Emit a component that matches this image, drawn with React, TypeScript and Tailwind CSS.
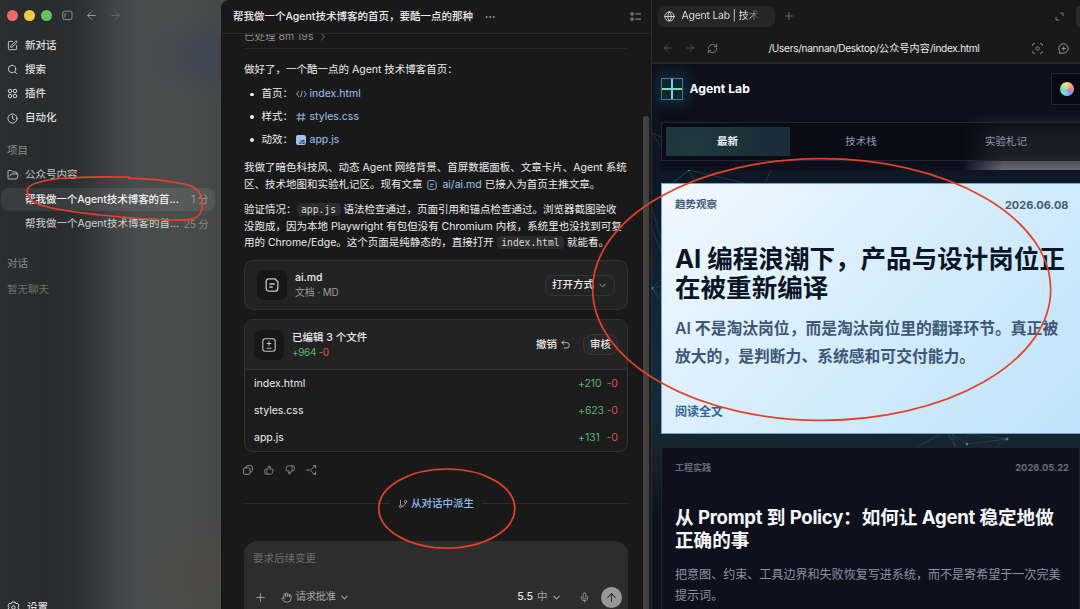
import type { ReactNode } from 'react';
import {
  ArrowLeft,
  ArrowRight,
  ArrowUp,
  ChevronDown,
  ChevronRight,
  Clock,
  Ellipsis,
  FolderOpen,
  GitBranch,
  Globe,
  Hand,
  Mic,
  Plus,
  RefreshCw,
  Search,
  SquarePen,
  ThumbsDown,
  ThumbsUp,
} from 'lucide-react';

const files = [
  { name: 'index.html', added: '+210', removed: '-0' },
  { name: 'styles.css', added: '+623', removed: '-0' },
  { name: 'app.js', added: '+131', removed: '-0' },
];

export default function App() {
  return (
    <div className="relative flex h-[609px] w-[1080px] overflow-hidden whitespace-nowrap bg-[#4a4b4c] font-['Inter','Noto_Sans_CJK_SC',sans-serif] text-[10.5px] leading-4 text-[#ececec]">
      <Sidebar />
      <Chat />
      <Preview />
      <Annotations />
    </div>
  );
}

function Sidebar() {
  return (
    <aside className="h-full w-[221px] shrink-0 overflow-hidden bg-[radial-gradient(ellipse_66px_46px_at_208px_56px,#3f4754_0%,#3f475400_100%),radial-gradient(ellipse_80px_55px_at_225px_575px,#4d4a42_0%,#4d4a4200_100%),linear-gradient(to_right,#2b2d2e_0px,#292c2d_45px,#2c2d2f_72px,#353638_92px,#434446_115px,#4a4b4c_140px,#4b4d4d_175px,#474848_221px)]">
      <div className="flex h-[31px] items-center pl-[6.5px]">
        <span className="size-[11px] rounded-full bg-[#ee6a65]" />
        <span className="ml-[6.3px] size-[11px] rounded-full bg-[#f4c945]" />
        <span className="ml-[6.3px] size-[11px] rounded-full bg-[#61c566]" />
        <svg className="ml-[9.5px] text-[#9a9c9c]" width="11" height="11" viewBox="0 0 11 11" fill="none" stroke="currentColor" strokeWidth="0.9">
          <rect x="0.8" y="1.2" width="9.2" height="8.4" rx="1.8" />
          <path d="M3 3.2v4.4" />
        </svg>
        <ArrowLeft className="ml-3 text-[#a4a6a6]" size={13} strokeWidth={1.6} />
        <ArrowRight className="ml-[11px] text-[#6a6c6c]" size={13} strokeWidth={1.6} />
      </div>

      <nav className="mt-[2.5px] font-medium text-[#dedfdf]">
        <NavItem icon={<SquarePen size={11} strokeWidth={1.9} />} label="新对话" />
        <NavItem icon={<Search size={11} strokeWidth={1.9} />} label="搜索" />
        <NavItem icon={<PluginIcon />} label="插件" />
        <NavItem icon={<Clock size={11} strokeWidth={1.9} />} label="自动化" />
      </nav>

      <div className="mt-[12.5px] pl-[7px] text-[#8b8d8d]">项目</div>
      <div className="mt-1 text-[#c3c4c4]">
        <NavItem icon={<FolderOpen size={12} strokeWidth={1.8} />} label="公众号内容" />
      </div>
      <div className="ml-px mt-px flex h-[23.5px] w-[214px] items-center rounded-lg bg-white/8 pl-6 pr-[6.5px] font-medium tracking-[-0.06px] text-[#f2f2f2]">
        帮我做一个Agent技术博客的首...
        <span className="ml-auto font-normal text-[#999b9b]">1 分</span>
      </div>
      <div className="ml-px mt-px flex h-[23.5px] w-[214px] items-center pl-6 pr-[6.5px] text-[#d2d3d3]">
        帮我做一个Agent技术博客的首...
        <span className="ml-auto text-[10.2px] tracking-[-0.2px] text-[#8b8d8d]">25 分</span>
      </div>

      <div className="mt-5 pl-[7px] text-[#8b8d8d]">对话</div>
      <div className="mt-[10px] pl-[7px] text-[#6c6e6e]">暂无聊天</div>
      <div className="mt-[302px] flex items-center gap-[7px] pl-[7px] font-medium text-[#dedfdf]">
        <svg width="13" height="13" viewBox="0 0 13 13" fill="none" stroke="currentColor" strokeWidth="1" strokeLinejoin="round">
          <path d="M5 1h3l.8 1.6 2-.1 1.2 2.4-1 1.6 1 1.6-1.2 2.4-2-.1L8 12H5l-.8-1.6-2 .1L1 8.1l1-1.6-1-1.6 1.2-2.4 2 .1z" />
          <circle cx="6.5" cy="6.5" r="1.7" />
        </svg>
        设置
      </div>
    </aside>
  );
}

function NavItem({ icon, label }: { icon: ReactNode; label: string }) {
  return (
    <div className="flex h-[24.2px] items-center">
      <span className="flex w-[25px] shrink-0 justify-center">{icon}</span>
      {label}
    </div>
  );
}

function PluginIcon() {
  return (
    <svg width="11" height="11" viewBox="0 0 11 11" fill="none" stroke="currentColor" strokeWidth="0.95">
      <circle cx="3" cy="3" r="1.75" />
      <circle cx="8" cy="3" r="1.75" />
      <circle cx="3" cy="8" r="1.75" />
      <circle cx="8" cy="8" r="1.75" />
    </svg>
  );
}

function Chat() {
  return (
    <main className="relative flex h-full w-[431px] shrink-0 flex-col overflow-hidden rounded-tl-lg border-r border-[#2c2c2c] bg-[#191919]">
      <header className="flex h-[34px] shrink-0 items-center border-b border-[#292929] pl-3 pr-2.5 font-medium">
        帮我做一个Agent技术博客的首页，要酷一点的那种
        <Ellipsis className="ml-[11px] text-[#9a9a9a]" size={12} />
        <svg className="ml-auto text-[#9a9a9a]" width="11" height="11" viewBox="0 0 11 11" fill="none" stroke="currentColor">
          <circle cx="2" cy="2.9" r="1.3" />
          <circle cx="2" cy="8.1" r="1.3" />
          <path d="M5.5 2.9H11M5.5 8.1H11" />
        </svg>
      </header>

      <div className="min-h-0 flex-1 overflow-hidden px-[23px]">
        <div className="-mt-[5px] flex h-5 items-start border-b border-[#262626] text-[#8f8f8f]">
          已处理 8m 19s
          <ChevronRight className="ml-1 mt-0.5" size={12} strokeWidth={1.5} />
        </div>
        <p className="mt-[13px]">做好了，一个酷一点的 Agent 技术博客首页：</p>
        <ul className="mt-[5px]">
          <FileLink label="首页：" name="index.html" icon={<CodeIcon />} />
          <FileLink label="样式：" name="styles.css" icon={<HashIcon />} />
          <FileLink
            label="动效："
            name="app.js"
            icon={<span className="flex size-[10px] items-end justify-end rounded-[2px] bg-[#99c4f2] pr-px text-[5px] font-bold leading-[6px] text-[#191919]">JS</span>}
          />
        </ul>
        <p className="mt-[8.5px] leading-[16.7px]">
          我做了暗色科技风、动态 Agent 网络背景、首屏数据面板、文章卡片、Agent 系统
          <br />
          区、技术地图和实验札记区。现有文章{' '}
          <DocIcon className="mx-0.5 inline size-[10px] text-[#8ab8ec]" />{' '}
          <span className="text-[#99c4f2]">ai/ai.md</span> 已接入为首页主推文章。
        </p>
        <p className="mt-[8.5px] leading-[16.7px]">
          验证情况：<Code>app.js</Code> 语法检查通过，页面引用和锚点检查通过。浏览器截图验收
          <br />
          没跑成，因为本地 Playwright 有包但没有 Chromium 内核，系统里也没找到可复
          <br />
          用的 Chrome/Edge。这个页面是纯静态的，直接打开 <Code>index.html</Code> 就能看。
        </p>

        <div className="mt-[8.5px] flex h-[50px] items-center rounded-[9px] border border-[#303030] bg-[#232323] px-3">
          <span className="flex size-[30px] items-center justify-center rounded-[7px] bg-[#171717]">
            <DocIcon className="size-[14px] text-[#c4c4c4]" />
          </span>
          <div className="ml-2 leading-[15px]">
            <div className="font-medium">ai.md</div>
            <div className="text-[9.9px] tracking-[-0.1px] text-[#9b9b9b]">文档 · MD</div>
          </div>
          <button className="ml-auto flex h-[21px] items-center rounded-[8px] border border-[#353535] px-1.5 font-medium">
            打开方式
            <ChevronDown className="ml-[3px] text-[#a5a5a5]" size={11} strokeWidth={2} />
          </button>
        </div>

        <div className="mt-[9px] overflow-hidden rounded-[9px] border border-[#303030] bg-[#1c1c1c]">
          <div className="flex h-[49.5px] items-center border-b border-[#303030] bg-[#232323] px-[9px]">
            <span className="flex size-[30px] items-center justify-center rounded-[7px] bg-[#171717]">
              <svg className="text-[#c4c4c4]" width="14" height="14" viewBox="0 0 14 14" fill="none" stroke="currentColor" strokeWidth="1.1">
                <rect x="0.8" y="0.8" width="12.4" height="12.4" rx="2.5" />
                <path d="M7 3.2v4.6M4.7 5.5h4.6M4.7 10.3h4.6" />
              </svg>
            </span>
            <div className="ml-2 leading-[15px]">
              <div className="font-medium">已编辑 3 个文件</div>
              <div className="text-[10px] tracking-[-0.35px]">
                <span className="text-[#58b470]">+964</span> <span className="text-[#d9524a]">-0</span>
              </div>
            </div>
            <span className="ml-auto font-medium">撤销</span>
            <svg className="ml-1 text-[#c4c4c4]" width="9" height="9" viewBox="0 0 9 9" fill="none" stroke="currentColor" strokeWidth="0.9" strokeLinecap="round" strokeLinejoin="round">
              <path d="M3 .6.8 2.6 3 4.6M.8 2.6h4.8a2.7 2.7 0 0 1 0 5.4H3.4" />
            </svg>
            <button className="ml-[13px] h-[21px] rounded-[8px] border border-[#363636] bg-[#282828] px-1.5 font-medium">审核</button>
          </div>
          {files.map((f) => (
            <div key={f.name} className="flex h-[27.2px] items-center px-[9px]">
              <span className="mr-auto">{f.name}</span>
              <span className="w-[28.5px] tracking-[-0.1px] text-[#58b470]">{f.added}</span>
              <span className="text-[#d9524a]">{f.removed}</span>
            </div>
          ))}
        </div>

        <div className="mt-[9px] flex h-[17px] items-center gap-[11px] text-[#969696]">
          <svg className="-ml-px shrink-0" width="10" height="10" viewBox="0 0 10 10" fill="none" stroke="currentColor" strokeWidth="0.9">
            <rect x="0.5" y="2.8" width="6.5" height="6.5" rx="1.4" />
            <path d="M3 2.6V1.9C3 1.1 3.6.6 4.3.6h3.6c.9 0 1.5.6 1.5 1.4v3.6c0 .8-.6 1.4-1.5 1.4H7.2" />
          </svg>
          <ThumbsUp size={10} strokeWidth={1.9} />
          <ThumbsDown size={10} strokeWidth={1.9} />
          <svg width="11" height="10" viewBox="0 0 11 10" fill="none" stroke="currentColor" strokeWidth="0.9">
            <path d="M0 5h3.5c1.5 0 2-.8 2.8-1.8L9.5.8M7 .7h2.7v2.6M5.2 5.8c1 2 2.4 3.3 4.3 3.4M9.7 6.5v2.7H7.5" />
          </svg>
        </div>

        <div className="mt-[17.5px] flex items-center gap-2">
          <span className="h-px flex-1 bg-[#2b2b2b]" />
          <span className="flex items-center gap-[3px] font-medium text-[#8fbcf0]">
            <GitBranch className="text-[#b5b5b5]" size={10} strokeWidth={1.9} />
            从对话中派生
          </span>
          <span className="h-px flex-1 bg-[#2b2b2b]" />
        </div>
      </div>

      <div className="mx-[23px] flex h-[68px] shrink-0 flex-col rounded-t-[14px] bg-[#2d2d2d] px-[9px] pt-[9.5px]">
        <span className="text-[#6c6c6c]">要求后续变更</span>
        <div className="mt-[19.5px] flex h-[22px] items-center text-[#a5a5a5]">
          <Plus className="ml-px" size={13} strokeWidth={1.7} />
          <Hand className="ml-[14px]" size={11} strokeWidth={2} />
          <span className="ml-[3.5px] tracking-[-0.5px]">请求批准</span>
          <ChevronDown className="ml-[3px]" size={11} strokeWidth={2.2} />
          <span className="ml-auto font-medium text-[#e4e4e4]">5.5</span>
          <span className="ml-[4px]">中</span>
          <ChevronDown className="ml-[3px]" size={11} strokeWidth={2.2} />
          <Mic className="ml-[17px]" size={11} strokeWidth={1.8} />
          <span className="-mr-[2.5px] ml-[11px] flex size-[21px] items-center justify-center rounded-full bg-[#989898] text-[#2d2d2d]">
            <ArrowUp size={13} strokeWidth={1.9} />
          </span>
        </div>
      </div>

      <div className="absolute right-[2px] top-[116px] h-[500px] w-[6px] rounded-full bg-[#414141]" />
    </main>
  );
}

function FileLink({ label, name, icon }: { label: string; name: string; icon: ReactNode }) {
  return (
    <li className="flex h-[22.8px] items-center">
      <span className="ml-1.5 mr-[8px] size-[3.5px] rounded-full bg-[#ececec]" />
      <span className="w-[34px]">{label}</span>
      <span className="mr-[3px] flex w-[11px] justify-center text-[#8ab8ec]">{icon}</span>
      <span className="text-[#99c4f2]">{name}</span>
    </li>
  );
}

function Code({ children }: { children: ReactNode }) {
  return (
    <code className="rounded-[4px] bg-[#2b2b2b] px-[4.5px] py-px font-['DejaVu_Sans_Mono',monospace] text-[9.7px] text-[#dcdcdc]">{children}</code>
  );
}

function CodeIcon() {
  return (
    <svg width="11" height="8" viewBox="0 0 11 8" fill="none" stroke="currentColor" strokeWidth="0.9">
      <path d="M3 1 .7 4 3 7M8 1l2.3 3L8 7M6.4.8 4.6 7.2" />
    </svg>
  );
}

function HashIcon() {
  return (
    <svg width="10" height="10" viewBox="0 0 10 10" fill="none" stroke="currentColor" strokeWidth="1">
      <path d="M3.3.8 2.7 9.2M7.3.8 6.7 9.2M.5 3.2h9M.5 6.8h9" />
    </svg>
  );
}

function DocIcon({ className }: { className: string }) {
  return (
    <svg className={className} viewBox="0 0 14 14" fill="none" stroke="currentColor" strokeWidth="1.3" strokeLinejoin="round">
      <path d="M3.5.8h6.3l3 3v6.7a2.7 2.7 0 0 1-2.7 2.7H3.9a2.7 2.7 0 0 1-2.7-2.7V3.1A2.3 2.3 0 0 1 3.5.8zM4.3 6h5.4M4.3 9h3.4" />
    </svg>
  );
}

function Preview() {
  return (
    <section className="flex h-full min-w-0 flex-1 flex-col overflow-hidden bg-[#191919]">
      <div className="flex h-8 shrink-0 items-center pl-1.5">
        <div className="flex h-[21px] w-[117px] items-center rounded-[7px] bg-[#262626] pl-1.5">
          <Globe size={11} strokeWidth={1.8} />
          <span className="ml-[6.5px] bg-linear-to-r from-[#ececec] from-80% to-[#555] bg-clip-text tracking-[-0.25px] text-transparent">Agent Lab | 技术</span>
        </div>
        <Plus className="ml-2 text-[#777]" size={12} strokeWidth={1.7} />
        <svg className="ml-auto mr-[12px] text-[#8a8a8a]" width="9" height="9" viewBox="0 0 9 9" fill="none" stroke="currentColor" strokeWidth="0.9">
          <path d="M5 1h3v3M1 5v3h3" />
        </svg>
        <span className="h-[21px] w-1 rounded-l-[7px] bg-[#2a2a2a]" />
      </div>
      <div className="flex h-8 shrink-0 items-center border-b-2 border-[#272727] pl-2.5 pt-0.5">
        <ArrowLeft className="text-[#555]" size={12} strokeWidth={1.6} />
        <ArrowRight className="ml-2.5 text-[#555]" size={12} strokeWidth={1.6} />
        <RefreshCw className="ml-[10.5px] text-[#8a8a8a]" size={11} strokeWidth={1.9} />
        <span className="ml-[51px] text-[10.1px] tracking-[-0.3px]">
          /Users/nannan/Desktop/<span className="tracking-[0.1px]">公众号内容</span>/index.html
        </span>
        <svg className="ml-auto text-[#8a8a8a]" width="11" height="11" viewBox="0 0 11 11" fill="none" stroke="currentColor" strokeWidth="0.9">
          <path d="M.6 3V2C.6 1.2 1.2.6 2 .6h1M8 .6h1c.8 0 1.4.6 1.4 1.4v1M10.4 8v1c0 .8-.6 1.4-1.4 1.4H8M3 10.4H2C1.2 10.4.6 9.8.6 9V8" />
          <circle cx="5.5" cy="5.5" r="1.7" />
        </svg>
        <svg className="ml-[15.5px] mr-[11px] text-[#a0a0a0]" width="11" height="11" viewBox="0 0 11 11" fill="none" stroke="currentColor" strokeWidth="0.9">
          <path d="M1 10.2h4.5A4.7 4.7 0 1 0 1.7 8.3zM5.7 3.5v4M3.7 5.5h4" />
        </svg>
      </div>

      <div className="relative flex-1 overflow-hidden bg-[linear-gradient(to_bottom,#0c0f1b_0%,#0e1724_20%,#142534_45%,#122b3d_60%,#16252f_70%,#0c111b_85%)]">
        <Network />
        <div className="relative ml-[8.5px]">
          <div className="relative h-[106px] bg-[#0d101b]">
            <div className="absolute bottom-0 right-0 h-[58px] w-[118px] bg-[linear-gradient(to_bottom,#50535c00_0%,#50535c99_45%,#50535cb0_75%,#686b74_100%)] mask-linear-[to_right,transparent_0%,black_35%]" />
            <div className="relative flex h-[49px] items-center">
              <span className="relative size-[22px] border border-[#3f7f92] bg-[#12222e] shadow-[0_0_14px_4px_#1a4b5c80]">
                <span className="absolute left-[9px] top-0 h-full w-0.5 bg-[#6fd0ee]" />
                <span className="absolute left-0 top-[9px] h-0.5 w-full bg-[#77dfae]" />
              </span>
              <span className="ml-[7px] text-[12.2px] font-bold text-white">Agent Lab</span>
              <div className="ml-auto flex h-8 w-[29px] items-center border border-r-0 border-[#222630] bg-[#070a12] pl-2">
                <span className="size-[14px] rounded-full bg-[conic-gradient(#f6d77c,#ef7d9a_90deg,#9a8be0_140deg,#73d5e8_190deg,#7ce0b0_270deg,#c6e58e_320deg,#f6d77c)]" />
              </div>
            </div>
            <div className="relative mt-[9px] flex h-[39px] gap-0.5 border border-r-0 border-[#222630] bg-[#070a12]/60 p-1 text-center leading-[29px] text-[#8f97a8]">
              <span className="w-[124px] shrink-0 bg-[radial-gradient(circle_at_20%_80%,#203a42,#1b2c38_80%)] font-semibold text-[#eef3f8]">最新</span>
              <span className="w-[139px] shrink-0">技术栈</span>
              <span className="w-[147px] shrink-0">实验札记</span>
            </div>
          </div>

          <article className="mt-[12.5px] h-[251px] border border-r-0 border-[#6fa6cc] bg-[linear-gradient(135deg,#f2f8ff_0%,#d8eefc_45%,#bfe3fb_100%)] pl-[13.5px] pr-[11.5px]">
            <div className="mt-[13.5px] flex justify-between font-bold text-[#455a78]">
              <span>趋势观察</span>
              <span className="text-[11px]">2026.06.08</span>
            </div>
            <h2 className="mt-[31px] text-[25.55px] font-bold leading-[29.4px] text-[#0a1526]">
              AI 编程浪潮下，产品与设计岗位正
              <br />
              在被重新编译
            </h2>
            <p className="mt-[12px] text-[15.8px] font-semibold leading-7 text-[#3f5774]">
              AI 不是淘汰岗位，而是淘汰岗位里的翻译环节。真正被
              <br />
              放大的，是判断力、系统感和可交付能力。
            </p>
            <div className="mt-[33px] text-xs font-bold text-[#2f6690]">阅读全文</div>
          </article>

          <article className="mt-[13.5px] h-[180px] border border-[#20242f] bg-[#0e111b] pl-[13.5px] pr-[10px]">
            <div className="mt-[11.5px] flex justify-between text-[9px] font-semibold text-[#646b7c]">
              <span>工程实践</span>
              <span className="text-[9.4px] font-bold">2026.05.22</span>
            </div>
            <h2 className="mt-[30px] text-[18.6px] font-bold leading-[23.5px] text-[#f4f6fa]">
              从 <span className="tracking-[-0.3px]">Prompt</span> 到 <span className="tracking-[-0.3px]">Policy</span>：如何让 <span className="tracking-[-0.3px]">Agent</span> 稳定地做
              <br />
              正确的事
            </h2>
            <p className="mt-[11.5px] text-[12.06px] leading-[21.3px] text-[#8b92a3]">
              把意图、约束、工具边界和失败恢复写进系统，而不是寄希望于一次完美
              <br />
              提示词。
            </p>
          </article>
        </div>
      </div>
    </section>
  );
}

// faint node graph behind the cards
function Network() {
  return (
    <svg className="absolute inset-0" width="428" height="546" viewBox="0 0 428 546" fill="none" stroke="#4fb3a5" strokeOpacity="0.28" strokeWidth="0.7">
      <path d="M37 106 9 128M37 106 21 119M37 106 44 119M37 106l55 13M119 106l-6 13M0 69l9 4M0 69l9 14" />
      <path d="M0 224 9 215M0 224l9-2M0 224l9 8M0 224l9 14M0 165l9 22M0 145l9 30" />
      <path d="M297 368 315 380 355 375 300 368M315 380l-1 6M300 368l4 18M295 368l10 18M355 375l-14 11M260 386l28-16" />
      <g fill="#4fb3a5" fillOpacity="0.7" stroke="none">
        <circle cx="37" cy="106" r="1.2" />
        <circle cx="315" cy="380" r="1.2" />
        <circle cx="355" cy="375" r="1.4" />
        <circle cx="0" cy="224" r="1.2" />
      </g>
    </svg>
  );
}

// red marker strokes drawn over all three panels
function Annotations() {
  return (
    <svg className="pointer-events-none absolute inset-0" width="1080" height="609" viewBox="0 0 1080 609" fill="none" stroke="#e5412a" strokeWidth="1.7" strokeLinecap="round">
      <path d="M129 177C100 176.5 75 177 60 178.5 42 180.5 28 184 27.3 190 27 198 33 203 42 205.5 60 211 80 212.5 100 215 125 217.5 145 219.5 167 220 180 220.2 190 220.5 196 217.5 202 214 203 207 201.8 200 200 190 195 187 186 184.5 170 181 150 178 129 178.3" />
      <ellipse cx="446.8" cy="508.6" rx="68" ry="39.6" />
      <ellipse cx="821.7" cy="289.5" rx="229" ry="130.8" />
    </svg>
  );
}
